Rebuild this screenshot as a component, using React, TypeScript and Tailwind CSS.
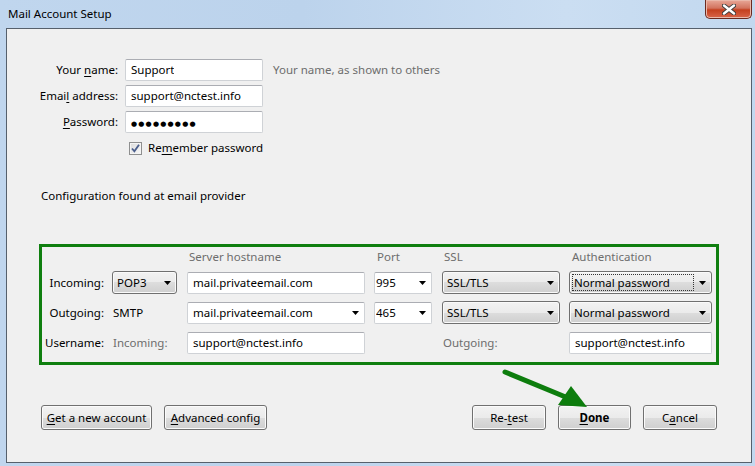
import type { ReactNode } from "react";

function Caret() {
  return (
    <svg width="7" height="4" viewBox="0 0 7 4" className="shrink-0">
      <path d="M0 0h7L3.5 4z" fill="#000" />
    </svg>
  );
}

function Key({ children }: { children: ReactNode }) {
  return <span className="underline underline-offset-[2px]">{children}</span>;
}

function TextBox({
  value,
  className,
  combo,
  pad = "pl-[5px]",
}: {
  value: ReactNode;
  className: string;
  combo?: boolean;
  pad?: string;
}) {
  return (
    <div
      className={`flex items-center justify-between rounded-[2px] border border-[#cfd2d6] border-t-[#abadb3] bg-white pr-[5px] ${pad} ${className}`}
    >
      <span className="truncate">{value}</span>
      {combo && <Caret />}
    </div>
  );
}

function Select({
  value,
  className,
  focused,
}: {
  value: string;
  className: string;
  focused?: boolean;
}) {
  return (
    <div
      className={`flex h-[23px] items-center justify-between rounded-[3px] border border-[#707070] bg-[linear-gradient(#f2f2f2,#ebebeb_50%,#dddddd_50%,#cfcfcf)] pl-[3px] pr-[5px] shadow-[inset_0_0_0_1px_#fafafa] ${className}`}
    >
      <span
        className={`px-[1px] leading-[15px] ${
          focused ? "w-[120px] outline outline-1 outline-dotted outline-[#333]" : ""
        }`}
      >
        {value}
      </span>
      <Caret />
    </div>
  );
}

function Button({
  children,
  className,
  bold,
}: {
  children: ReactNode;
  className: string;
  bold?: boolean;
}) {
  return (
    <button
      type="button"
      className={`flex h-[25px] items-center justify-center rounded-[3px] border border-[#707070] bg-[linear-gradient(#f2f2f2,#ebebeb_50%,#dddddd_50%,#cfcfcf)] text-[11.5px] text-black shadow-[inset_0_0_0_1px_#fbfbfb] ${
        bold ? "font-bold" : ""
      } ${className}`}
    >
      {children}
    </button>
  );
}

export default function App() {
  return (
    <div className="relative flex h-[466px] w-[755px] flex-col overflow-hidden bg-[linear-gradient(90deg,#c0d6ee,#bcd3ec_40%,#cbdef2_75%,#c2d8ef)] font-['Noto_Sans',sans-serif] text-[11.5px] text-black">
      {/* title bar */}
      <div className="flex h-[28px] shrink-0 justify-between pr-[3px]">
        <span className="self-center pl-[8px] text-[11.5px] text-black">
          Mail Account Setup
        </span>
        <div className="flex h-[19px] w-[47px] items-center justify-center rounded-b-[5px] border border-t-0 border-[#6b2a20] bg-[linear-gradient(#e8a898,#d2735e_45%,#c4401f_55%,#d9654a)] shadow-[inset_0_0_0_1px_#eab8aa]">
          <svg width="14" height="11" viewBox="0 0 14 11">
            <path
              d="M2 1.5l10 8M12 1.5l-10 8"
              stroke="#3c3c3c"
              strokeWidth="4.2"
              strokeLinecap="round"
            />
            <path
              d="M2 1.5l10 8M12 1.5l-10 8"
              stroke="#fff"
              strokeWidth="2.4"
              strokeLinecap="round"
            />
          </svg>
        </div>
      </div>

      {/* client area */}
      <div className="ml-[6px] mr-[3px] flex h-[435px] shrink-0 flex-col border border-[#56606c] bg-[#f0f0f0]">
        <div className="mt-[30px] flex flex-col gap-[4px]">
          <div className="flex h-[22px] items-center">
            <label className="w-[111px] text-right">
              Your <Key>n</Key>ame:
            </label>
            <TextBox value="Support" className="ml-[7px] h-[22px] w-[138px]" />
            <span className="ml-[10px] text-[#6d6d6d]">
              Your name, as shown to others
            </span>
          </div>
          <div className="flex h-[22px] items-center">
            <label className="w-[111px] text-right">
              Emai<Key>l</Key> address:
            </label>
            <TextBox
              value="support@nctest.info"
              className="ml-[7px] h-[22px] w-[138px]"
            />
          </div>
          <div className="flex h-[22px] items-center">
            <label className="w-[111px] text-right">
              <Key>P</Key>assword:
            </label>
            <TextBox
              value={
                <span className="font-['DejaVu_Sans',sans-serif] text-[7px] tracking-[1.2px]">
                  ●●●●●●●●●
                </span>
              }
              className="ml-[7px] h-[22px] w-[138px]"
            />
          </div>
        </div>

        <div className="ml-[122px] mt-[7px] flex h-[16px] items-center">
          <div className="flex h-[13px] w-[13px] items-center justify-center border border-[#8e8f8f] bg-[linear-gradient(135deg,#dcdcdc,#f7f7f7)] shadow-[inset_0_0_0_1px_#f4f4f4]">
            <svg width="9" height="9" viewBox="0 0 9 9">
              <path
                d="M1 4.5l2.4 2.8L8 0.8"
                fill="none"
                stroke="#4a5e8c"
                strokeWidth="1.8"
              />
            </svg>
          </div>
          <span className="ml-[6px]">
            Re<Key>m</Key>ember password
          </span>
        </div>

        <div className="ml-[34px] mt-[32px] h-[16px] leading-[16px]">
          Configuration found at email provider
        </div>

        {/* server settings box */}
        <div className="ml-[32px] mt-[40px] flex h-[121px] w-[680px] flex-col border-[3px] border-[#0f7f0f]">
          <div className="ml-[146px] mt-[2px] flex h-[16px] items-center text-[#6d6d6d]">
            <span className="w-[187px] pl-[1px]">Server hostname</span>
            <span className="w-[68px] pl-[2px]">Port</span>
            <span className="w-[127px] pl-[1px]">SSL</span>
            <span className="pl-[2px]">Authentication</span>
          </div>

          <div className="mt-[6px] flex h-[23px] items-center">
            <span className="w-[62px] text-right">Incoming:</span>
            <Select value="POP3" className="ml-[8px] w-[65px]" />
            <TextBox
              value="mail.privateemail.com"
              className="ml-[10px] h-[22px] w-[178px]"
            />
            <TextBox
              value="995"
              combo
              pad="pl-[1px]"
              className="ml-[9px] h-[22px] w-[58px]"
            />
            <Select value="SSL/TLS" className="ml-[10px] w-[118px]" />
            <Select
              value="Normal password"
              focused
              className="ml-[9px] w-[143px]"
            />
          </div>

          <div className="mt-[7px] flex h-[23px] items-center">
            <span className="w-[62px] text-right">Outgoing:</span>
            <span className="ml-[9px] w-[64px]">SMTP</span>
            <TextBox
              value="mail.privateemail.com"
              combo
              className="ml-[10px] h-[22px] w-[178px]"
            />
            <TextBox
              value="465"
              combo
              pad="pl-[1px]"
              className="ml-[9px] h-[22px] w-[58px]"
            />
            <Select value="SSL/TLS" className="ml-[10px] w-[118px]" />
            <Select value="Normal password" className="ml-[9px] w-[143px]" />
          </div>

          <div className="mt-[8px] flex h-[22px] items-center">
            <span className="w-[62px] text-right">Username:</span>
            <span className="ml-[9px] w-[64px] text-[#6d6d6d]">Incoming:</span>
            <TextBox
              value="support@nctest.info"
              className="ml-[10px] h-[22px] w-[178px]"
            />
            <span className="ml-[78px] w-[126px] text-[#6d6d6d]">Outgoing:</span>
            <TextBox
              value="support@nctest.info"
              className="h-[22px] w-[143px]"
            />
          </div>
        </div>

        <div className="mt-[40px] flex items-center pl-[34px] pr-[34px]">
          <Button className="w-[111px]">
            <Key>G</Key>et a new account
          </Button>
          <Button className="ml-[12px] w-[103px]">
            <Key>A</Key>dvanced config
          </Button>
          <div className="ml-auto flex gap-[12px]">
            <Button className="w-[74px]">
              Re-<Key>t</Key>est
            </Button>
            <Button bold className="w-[73px]">
              <Key>D</Key>one
            </Button>
            <Button className="w-[74px]">
              C<Key>a</Key>ncel
            </Button>
          </div>
        </div>
      </div>

      {/* annotation arrow */}
      <svg
        className="pointer-events-none absolute left-0 top-0"
        width="755"
        height="466"
        viewBox="0 0 755 466"
      >
        <path
          d="M505 372L568 398"
          stroke="#0d7d0d"
          strokeWidth="5"
          strokeLinecap="round"
        />
        <path d="M587 407L571 386L558 405z" fill="#0d7d0d" />
      </svg>
    </div>
  );
}
